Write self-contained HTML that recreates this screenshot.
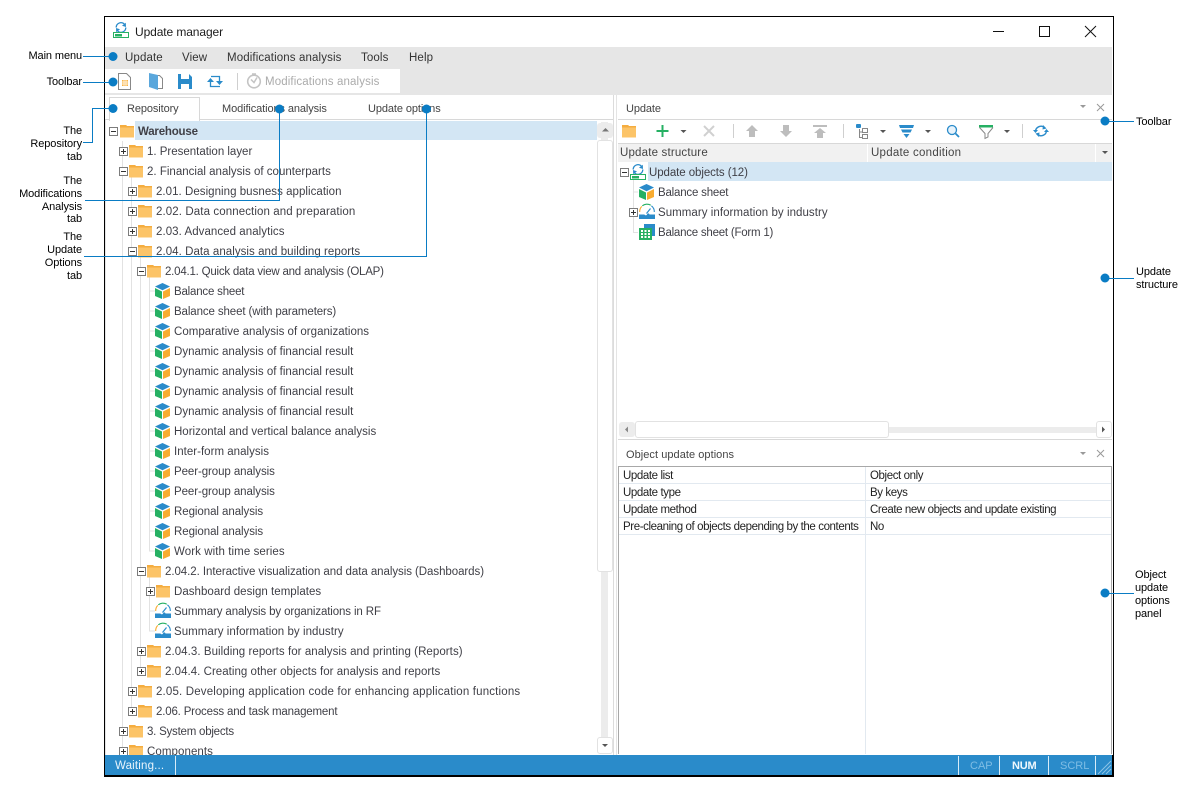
<!DOCTYPE html>
<html><head><meta charset="utf-8"><title>Update manager</title>
<style>
html,body{margin:0;padding:0;background:#fff;width:1201px;height:796px;overflow:hidden}
body{position:relative;font-family:"Liberation Sans",sans-serif}
.a{position:absolute}
.t{position:absolute;white-space:nowrap;font-size:11.5px;line-height:20px;height:20px;margin-top:1px;letter-spacing:0;color:#3f3f46}
.h{font-size:11px;letter-spacing:-.1px;color:#444}
.l{position:absolute;white-space:nowrap;font-size:11px;line-height:13px;height:13px;margin-top:1px;color:#000;width:82px;text-align:right;letter-spacing:-.1px}
.r{text-align:left}
.p{position:absolute;white-space:nowrap;font-size:11.5px;line-height:17px;height:17px;margin-top:1px;color:#222;letter-spacing:-.4px}
svg{position:absolute;left:0;top:0}
</style></head><body>
<!-- window -->
<div class="a" style="left:104px;top:16px;width:1008px;height:759px;border:1px solid #000"></div>
<div class="a" style="left:105px;top:47px;width:1007px;height:48px;background:#e6e6e6"></div>
<div class="a" style="left:105px;top:69px;width:295px;height:24px;background:#fff"></div>
<!-- tabs -->
<div class="a" style="left:105px;top:119px;width:508px;height:1px;background:#d8d8d8"></div>
<div class="a" style="left:109px;top:97px;width:89px;height:23px;background:#fff;border:1px solid #d8d8d8;border-bottom:0"></div>
<!-- splitter -->
<div class="a" style="left:613px;top:95px;width:1px;height:660px;background:#dcdcdc"></div>
<div class="a" style="left:616px;top:95px;width:1px;height:660px;background:#e4e4e4"></div>
<div class="a" style="left:105px;top:120px;width:1px;height:635px;background:#e4e4e4"></div>
<!-- selections -->
<div class="a" style="left:135px;top:121px;width:462px;height:19px;background:#d3e6f4"></div>
<div class="a" style="left:648px;top:162px;width:464px;height:19px;background:#d3e6f4"></div>
<!-- right panel chrome -->
<div class="a" style="left:618px;top:119px;width:494px;height:1px;background:#d8d8d8"></div>
<div class="a" style="left:618px;top:143px;width:494px;height:19px;background:#f1f1f1;border-top:1px solid #d8d8d8;box-sizing:border-box"></div>
<div class="a" style="left:867px;top:144px;width:1px;height:18px;background:#fff"></div>
<div class="a" style="left:1095px;top:144px;width:1px;height:18px;background:#fff"></div>
<div class="a" style="left:618px;top:439px;width:494px;height:1px;background:#d8d8d8"></div>
<div class="a" style="left:618px;top:466px;width:494px;height:288px;border:1px solid #a8a8a8;border-bottom:0;box-sizing:border-box"></div>
<div class="a" style="left:619px;top:483px;width:492px;height:1px;background:#e2e9f0"></div>
<div class="a" style="left:619px;top:500px;width:492px;height:1px;background:#e2e9f0"></div>
<div class="a" style="left:619px;top:517px;width:492px;height:1px;background:#e2e9f0"></div>
<div class="a" style="left:619px;top:534px;width:492px;height:1px;background:#e2e9f0"></div>
<div class="a" style="left:865px;top:467px;width:1px;height:287px;background:#e2e9f0"></div>
<!-- scrollbars -->
<div class="a" style="left:601px;top:122px;width:7px;height:632px;background:#ececec"></div>
<div class="a" style="left:597px;top:123px;width:16px;height:15px;background:#ececec;border-radius:3px;box-sizing:border-box"></div>
<div class="a" style="left:597px;top:140px;width:16px;height:432px;background:#fff;border:1px solid #e2e2e2;border-radius:3px;box-sizing:border-box"></div>
<div class="a" style="left:597px;top:737px;width:16px;height:17px;background:#fff;border:1px solid #e2e2e2;border-radius:3px;box-sizing:border-box"></div>
<div class="a" style="left:635px;top:427px;width:462px;height:6px;background:#ececec"></div>
<div class="a" style="left:619px;top:422px;width:16px;height:15px;background:#ececec;border-radius:3px"></div>
<div class="a" style="left:635px;top:421px;width:254px;height:17px;background:#fff;border:1px solid #e2e2e2;border-radius:3px;box-sizing:border-box"></div>
<div class="a" style="left:1096px;top:421px;width:16px;height:17px;background:#fff;border:1px solid #e2e2e2;border-radius:3px;box-sizing:border-box"></div>

<svg width="1201" height="796" viewBox="0 0 1201 796">
<defs>
<g id="f"><path d="M0 1h6l1 1h7v11.500H0z" fill="#fcc468"/><path d="M0 1h6l1 1h7v1.500H0z" fill="#f5ad3f"/></g>
<g id="c"><path d="M7.500 0l7.500 3.500-7.500 3.700L0 3.500z" fill="#2a8bca"/><path d="M0 5l7 3.500V16L0 13z" fill="#26b063"/><path d="M15 5L8 8.500V16l7-3z" fill="#f9ac30"/></g>
<g id="g"><path d="M.7 9A7.500 7.500 0 0 1 2.800 3.400" fill="none" stroke="#f9ac30" stroke-width="1.100"/><path d="M3.300 2.800A7.500 7.500 0 0 1 11.800 2.200" fill="none" stroke="#26b063" stroke-width="1.100"/><path d="M12.400 2.800A7.500 7.500 0 0 1 15.300 9" fill="none" stroke="#2a8bca" stroke-width="1.100"/><path d="M7.500 10.500L11.500 5.500" stroke="#2a8bca" stroke-width="1.200"/><path d="M0 11.500h5.500c.5 1 2 1 2.500 0 .8-1.500 2-1.500 2.500 0H16V16H0z" fill="#2a8bca"/></g>
<g id="pb"><rect x="1.500" y="1.500" width="8" height="8" fill="#fff" stroke="#7c7c7c"/><path d="M3 5.500h5M5.500 3v5" stroke="#333" fill="none"/></g>
<g id="mb"><rect x="1.500" y="1.500" width="8" height="8" fill="#fff" stroke="#7c7c7c"/><path d="M3 5.500h5" stroke="#333" fill="none"/></g>
<g id="u"><path d="M3.200 5.500a4.800 4.800 0 0 1 8.200-3.400M12.800 5.500a4.800 4.800 0 0 1-8.200 3.400" fill="none" stroke="#2a8bca" stroke-width="1.300"/><path d="M12.800 .8L13 5 9 3.700zM3.200 10.200L3 6l4 1.300z" fill="#2a8bca"/><rect x=".5" y="10.500" width="15" height="5" fill="#fff" stroke="#26b063"/><rect x="2" y="12" width="7" height="2.500" fill="#26b063"/></g>
<path id="da" d="M0 0h6L3 3z" fill="#555"/>
</defs>
<!-- tree lines -->
<g stroke="#e2e2e2" fill="none">
<path d="M122.500 141V755M131.500 176V711M140.500 256V671M149.500 276V551M149.500 576V631"/>
<path d="M149 291h6M149 311h6M149 331h6M149 351h6M149 371h6M149 391h6M149 411h6M149 431h6M149 451h6M149 471h6M149 491h6M149 511h6M149 531h6M149 551h6M149 611h6M149 631h6"/>
<path d="M633.500 178V232.500M633 192h5M633 232.500h5"/>
</g>
<!-- left tree icons -->
<use href="#mb" x="108" y="126"/><use href="#f" x="120" y="124"/>
<use href="#pb" x="118" y="146"/><use href="#f" x="129" y="144"/>
<use href="#mb" x="118" y="166"/><use href="#f" x="129" y="164"/>
<use href="#pb" x="127" y="186"/><use href="#f" x="138" y="184"/>
<use href="#pb" x="127" y="206"/><use href="#f" x="138" y="204"/>
<use href="#pb" x="127" y="226"/><use href="#f" x="138" y="224"/>
<use href="#mb" x="127" y="246"/><use href="#f" x="138" y="244"/>
<use href="#mb" x="136" y="266"/><use href="#f" x="147" y="264"/>
<use href="#c" x="155" y="283"/><use href="#c" x="155" y="303"/><use href="#c" x="155" y="323"/><use href="#c" x="155" y="343"/><use href="#c" x="155" y="363"/><use href="#c" x="155" y="383"/><use href="#c" x="155" y="403"/><use href="#c" x="155" y="423"/><use href="#c" x="155" y="443"/><use href="#c" x="155" y="463"/><use href="#c" x="155" y="483"/><use href="#c" x="155" y="503"/><use href="#c" x="155" y="523"/><use href="#c" x="155" y="543"/>
<use href="#mb" x="136" y="566"/><use href="#f" x="147" y="564"/>
<use href="#pb" x="145" y="586"/><use href="#f" x="156" y="584"/>
<use href="#g" x="155" y="602"/><use href="#g" x="155" y="622"/>
<use href="#pb" x="136" y="646"/><use href="#f" x="147" y="644"/>
<use href="#pb" x="136" y="666"/><use href="#f" x="147" y="664"/>
<use href="#pb" x="127" y="686"/><use href="#f" x="138" y="684"/>
<use href="#pb" x="127" y="706"/><use href="#f" x="138" y="704"/>
<use href="#pb" x="118" y="726"/><use href="#f" x="129" y="724"/>
<use href="#pb" x="118" y="746"/><use href="#f" x="129" y="744"/>
<!-- right tree icons -->
<use href="#mb" x="619" y="167"/><use href="#u" x="630" y="164"/>
<use href="#c" x="639" y="184"/>
<use href="#pb" x="628" y="207"/><use href="#g" x="639" y="203"/>
<g><rect x="644" y="224" width="11" height="12" fill="#2a8bca"/><rect x="639" y="228" width="13" height="12" fill="#26b063"/><path d="M641 230h2v2h-2zM644.500 230h2v2h-2zM648 230h2v2h-2zM641 233h2v2h-2zM644.500 233h2v2h-2zM648 233h2v2h-2zM641 236h2v2h-2zM644.500 236h2v2h-2zM648 236h2v2h-2z" fill="#fff"/></g>
<!-- title icon -->
<use href="#u" x="113" y="22"/>
<!-- window controls -->
<path d="M993 31.500h11" stroke="#111"/>
<rect x="1039.500" y="26.500" width="10" height="10" fill="none" stroke="#111"/>
<path d="M1085 26l11 11M1096 26l-11 11" stroke="#111" fill="none"/>
<!-- main toolbar -->
<path d="M118.500 73.500h8l4 4v12h-12z" fill="#fff" stroke="#888"/><path d="M122 80h6v6h-6z" fill="#f9ac30" opacity=".9"/><path d="M124 80v6M126 80v6M122 82h6M122 84h6" stroke="#fff" stroke-width=".7"/>
<path d="M157.500 75.500h2l3 3v10h-5z" fill="#fff" stroke="#888"/><path d="M149 73l9 2v15l-9-3z" fill="#5aa7dc"/>
<path d="M178 74h11l3 3v12h-14z" fill="#2a8bca"/><rect x="181" y="74" width="8" height="5" fill="#fff"/><rect x="181" y="84" width="8" height="5" fill="#fff"/>
<path d="M210.500 82v4.500h9.500M219.500 81v-4.500H211" fill="none" stroke="#2a8bca" stroke-width="1.300"/><path d="M207 82h7l-3.500-4zM216 81h7l-3.500 4z" fill="#2a8bca"/>
<path d="M237.500 73v17" stroke="#cfcfcf"/>
<circle cx="254" cy="81.500" r="6.300" fill="none" stroke="#c4c4c4" stroke-width="1.600"/><path d="M251 79.500l3 3 3-5M252 74h4" stroke="#c4c4c4" stroke-width="1.500" fill="none"/>
<!-- right header small -->
<use href="#da" x="1080" y="105" opacity=".6"/><path d="M1097 104l7 7M1104 104l-7 7" stroke="#999" fill="none"/>
<use href="#da" x="1080" y="452" opacity=".6"/><path d="M1097 450l7 7M1104 450l-7 7" stroke="#999" fill="none"/>
<!-- right toolbar -->
<use href="#f" x="622" y="124"/>
<path d="M662.500 125v12M656.500 131h12" stroke="#26b063" stroke-width="2" fill="none"/>
<use href="#da" x="680.500" y="130"/>
<path d="M704 126l10 10M714 126l-10 10" stroke="#d0d0d0" stroke-width="2" fill="none"/>
<path d="M733.500 124v14M843.500 124v14M1022.500 124v14" stroke="#cfcfcf"/>
<path d="M752 125l6 6h-3v6h-6v-6h-3z" fill="#bdbdbd"/>
<path d="M786 137l6-6h-3v-6h-6v6h-3z" fill="#bdbdbd"/>
<path d="M813 125h14v2h-14zM820 128l6 5h-3v5h-6v-5h-3z" fill="#bdbdbd"/>
<rect x="856" y="124" width="5" height="4" rx="1" fill="#2a8bca"/>
<path d="M859.500 129v9M859 132h3M859 137.500h3" stroke="#888" fill="none"/><path d="M862.500 128.500h5v4h-5zM862.500 134.500h5v4h-5z" fill="none" stroke="#888"/>
<use href="#da" x="880" y="130"/>
<path d="M899 125h15l-1 3h-13z" fill="#2a8bca"/><path d="M901 129.500h11l-1.500 3h-8z" fill="#2a8bca"/><path d="M903.500 134h6l-3 4z" fill="#2a8bca"/>
<use href="#da" x="925" y="130"/>
<circle cx="952" cy="130" r="4.500" fill="#e8f3fb" stroke="#2a8bca" stroke-width="1.300"/><path d="M955.500 133.500l3.500 3.500" stroke="#2a8bca" stroke-width="1.800"/>
<rect x="979" y="125" width="14" height="2.500" fill="#26b063"/><path d="M979.500 127.500l5.500 6v5l3-1.500v-3.500l5-6" fill="none" stroke="#888"/>
<use href="#da" x="1004" y="130"/>
<path d="M1035.500 132a5.500 5.500 0 0 1 9.500-4M1046.500 130a5.500 5.500 0 0 1-9.500 4" fill="none" stroke="#2a8bca" stroke-width="1.400"/><path d="M1043 125l3.500 3.500-4 1zM1039 137l-3.500-3.500 4-1zM1033 130h5l-2.500 3zM1044 132h5l-2.500-3z" fill="#2a8bca"/>
<use href="#da" x="1102" y="151" />
<!-- scroll arrows -->
<path d="M602 131.500l3.500-3.500 3.500 3.500z" fill="#777"/><use href="#da" x="602" y="744"/>
<path d="M625 429.500l3-3v6z" fill="#888"/><path d="M1102 426.500l3 3-3 3z" fill="#555"/>
</svg>

<!-- Title + menu -->
<div class="t" style="left:135px;top:22px;color:#1c1c1c;font-size:12px;margin:0;letter-spacing:-.1px">Update manager</div>
<div class="t" style="left:125px;top:47px;color:#333;letter-spacing:.12px">Update</div>
<div class="t" style="left:182px;top:47px;color:#333;letter-spacing:.12px">View</div>
<div class="t" style="left:227px;top:47px;color:#333;letter-spacing:.12px">Modifications analysis</div>
<div class="t" style="left:361px;top:47px;color:#333;letter-spacing:.12px">Tools</div>
<div class="t" style="left:409px;top:47px;color:#333;letter-spacing:.12px">Help</div>
<div class="t" style="left:265px;top:71px;color:#ababab;letter-spacing:.12px">Modifications analysis</div>
<!-- Tabs -->
<div class="t h" style="left:127px;top:98px">Repository</div>
<div class="t h" style="left:222px;top:98px">Modifications analysis</div>
<div class="t h" style="left:368px;top:98px">Update options</div>
<!-- Left tree -->
<div class="t" style="left:138px;top:121px;font-weight:bold;letter-spacing:-.2px">Warehouse</div>
<div class="t" style="left:147px;top:141px;letter-spacing:-.01px">1. Presentation layer</div>
<div class="t" style="left:147px;top:161px;letter-spacing:.01px">2. Financial analysis of counterparts</div>
<div class="t" style="left:156px;top:181px;letter-spacing:.04px">2.01. Designing busness application</div>
<div class="t" style="left:156px;top:201px;letter-spacing:.1px">2.02. Data connection and preparation</div>
<div class="t" style="left:156px;top:221px;letter-spacing:.055px">2.03. Advanced analytics</div>
<div class="t" style="left:156px;top:241px;letter-spacing:.055px">2.04. Data analysis and building reports</div>
<div class="t" style="left:165px;top:261px;letter-spacing:-.22px">2.04.1. Quick data view and analysis (OLAP)</div>
<div class="t" style="left:174px;top:281px;letter-spacing:-.2px">Balance sheet</div>
<div class="t" style="left:174px;top:301px;letter-spacing:-.11px">Balance sheet (with parameters)</div>
<div class="t" style="left:174px;top:321px;letter-spacing:.02px">Comparative analysis of organizations</div>
<div class="t" style="left:174px;top:341px;letter-spacing:.01px">Dynamic analysis of financial result</div>
<div class="t" style="left:174px;top:361px;letter-spacing:.01px">Dynamic analysis of financial result</div>
<div class="t" style="left:174px;top:381px;letter-spacing:.01px">Dynamic analysis of financial result</div>
<div class="t" style="left:174px;top:401px;letter-spacing:.01px">Dynamic analysis of financial result</div>
<div class="t" style="left:174px;top:421px;letter-spacing:.005px">Horizontal and vertical balance analysis</div>
<div class="t" style="left:174px;top:441px;letter-spacing:.02px">Inter-form analysis</div>
<div class="t" style="left:174px;top:461px;letter-spacing:-.08px">Peer-group analysis</div>
<div class="t" style="left:174px;top:481px;letter-spacing:-.08px">Peer-group analysis</div>
<div class="t" style="left:174px;top:501px;letter-spacing:-.06px">Regional analysis</div>
<div class="t" style="left:174px;top:521px;letter-spacing:-.06px">Regional analysis</div>
<div class="t" style="left:174px;top:541px;letter-spacing:.08px">Work with time series</div>
<div class="t" style="left:165px;top:561px;letter-spacing:-.06px">2.04.2. Interactive visualization and data analysis (Dashboards)</div>
<div class="t" style="left:174px;top:581px;letter-spacing:.03px">Dashboard design templates</div>
<div class="t" style="left:174px;top:601px;letter-spacing:-.12px">Summary analysis by organizations in RF</div>
<div class="t" style="left:174px;top:621px;letter-spacing:.05px">Summary information by industry</div>
<div class="t" style="left:165px;top:641px;letter-spacing:.06px">2.04.3. Building reports for analysis and printing (Reports)</div>
<div class="t" style="left:165px;top:661px;letter-spacing:.03px">2.04.4. Creating other objects for analysis and reports</div>
<div class="t" style="left:156px;top:681px;letter-spacing:.165px">2.05. Developing application code for enhancing application functions</div>
<div class="t" style="left:156px;top:701px;letter-spacing:-.18px">2.06. Process and task management</div>
<div class="t" style="left:147px;top:721px;letter-spacing:-.23px">3. System objects</div>
<div class="t" style="left:147px;top:741px;letter-spacing:.08px">Components</div>
<!-- Right -->
<div class="t h" style="left:626px;top:98px">Update</div>
<div class="t" style="left:620px;top:142px;color:#444;letter-spacing:.18px">Update structure</div>
<div class="t" style="left:871px;top:142px;color:#444;letter-spacing:.25px">Update condition</div>
<div class="t" style="left:649px;top:162px;letter-spacing:-.08px">Update objects (12)</div>
<div class="t" style="left:658px;top:182px;letter-spacing:-.2px">Balance sheet</div>
<div class="t" style="left:658px;top:202px;letter-spacing:.05px">Summary information by industry</div>
<div class="t" style="left:658px;top:222px;letter-spacing:-.23px">Balance sheet (Form 1)</div>
<div class="t h" style="left:626px;top:444px;letter-spacing:.05px">Object update options</div>
<div class="p" style="left:623px;top:467px">Update list</div><div class="p" style="left:870px;top:467px">Object only</div>
<div class="p" style="left:623px;top:484px">Update type</div><div class="p" style="left:870px;top:484px">By keys</div>
<div class="p" style="left:623px;top:501px">Update method</div><div class="p" style="left:870px;top:501px">Create new objects and update existing</div>
<div class="p" style="left:623px;top:518px">Pre-cleaning of objects depending by the contents</div><div class="p" style="left:870px;top:518px">No</div>
<!-- status -->
<div class="a" style="left:105px;top:755px;width:1008px;height:21px;background:#2a8bca;border-bottom:1px solid #000;box-sizing:border-box"></div>
<div class="a" style="left:175px;top:756px;width:1px;height:19px;background:#d8ecf8"></div>
<div class="a" style="left:958px;top:756px;width:1px;height:19px;background:#d8ecf8"></div>
<div class="a" style="left:999px;top:756px;width:1px;height:19px;background:#d8ecf8"></div>
<div class="a" style="left:1048px;top:756px;width:1px;height:19px;background:#d8ecf8"></div>
<div class="a" style="left:1095px;top:756px;width:1px;height:19px;background:#d8ecf8"></div>
<div class="a" style="left:1112px;top:755px;width:1px;height:21px;background:#000"></div>
<div class="t" style="left:115px;top:755px;color:#e8f4fc;letter-spacing:.18px">Waiting...</div>
<div class="t" style="left:970px;top:755px;color:#7fbde4;font-size:11px">CAP</div>
<div class="t" style="left:1012px;top:755px;color:#f0f8fd;font-size:11px;font-weight:bold;letter-spacing:-.2px">NUM</div>
<div class="t" style="left:1060px;top:755px;color:#7fbde4;font-size:11px">SCRL</div>
<svg width="1201" height="796" viewBox="0 0 1201 796">
<path d="M1098 774l13-13M1102 774l9-9M1106 774l5-5" stroke="#8cc3e6" fill="none"/>
<!-- callouts -->
<g stroke="#0a7cc4" fill="none">
<path d="M83 56.500h30M83 82.500h30M83 142.500h9.500V108.500H113M85 200.500h194.500V108M84 256.500h342.500V108M1105 121.500h29M1105 278.500h29M1105 593.500h29"/>
</g>
<g fill="#0a7cc4">
<circle cx="113" cy="56.500" r="4.500"/><circle cx="113" cy="82" r="4.500"/><circle cx="113" cy="108.500" r="4.500"/><circle cx="279.500" cy="109" r="4.500"/><circle cx="426.500" cy="109" r="4.500"/><circle cx="1105" cy="121" r="4.500"/><circle cx="1105" cy="278" r="4.500"/><circle cx="1105" cy="593" r="4.500"/>
</g>
</svg>
<!-- labels -->
<div class="l" style="left:0;top:49px">Main menu</div>
<div class="l" style="left:0;top:75px">Toolbar</div>
<div class="l" style="left:0;top:124px">The</div>
<div class="l" style="left:0;top:137px">Repository</div>
<div class="l" style="left:0;top:150px">tab</div>
<div class="l" style="left:0;top:174px">The</div>
<div class="l" style="left:0;top:187px">Modifications</div>
<div class="l" style="left:0;top:200px">Analysis</div>
<div class="l" style="left:0;top:212px">tab</div>
<div class="l" style="left:0;top:230px">The</div>
<div class="l" style="left:0;top:243px">Update</div>
<div class="l" style="left:0;top:256px">Options</div>
<div class="l" style="left:0;top:269px">tab</div>
<div class="l r" style="left:1136px;top:115px">Toolbar</div>
<div class="l r" style="left:1136px;top:265px">Update</div>
<div class="l r" style="left:1136px;top:278px">structure</div>
<div class="l r" style="left:1135px;top:568px">Object</div>
<div class="l r" style="left:1135px;top:581px">update</div>
<div class="l r" style="left:1135px;top:594px">options</div>
<div class="l r" style="left:1135px;top:607px">panel</div>
</body></html>
